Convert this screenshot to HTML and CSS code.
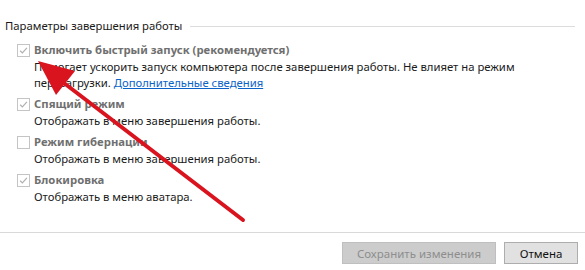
FILE: index.html
```html
<!DOCTYPE html>
<html lang="ru">
<head>
<meta charset="utf-8">
<link rel="stylesheet" href="styles.css">
</head>
<body>
<div class="page">
  <div class="group-title">
    <span class="group-text">Параметры завершения работы</span>
    <span class="rule"></span>
  </div>
  <ul class="options">
    <li class="option">
      <span class="cb checked"><svg viewBox="0 0 13 13"><path d="M2.5 6.8 L5.2 9.4 L10.5 3.4" /></svg></span>
      <div class="option-body">
        <div class="label">Включить быстрый запуск (рекомендуется)</div>
        <div class="desc">Помогает ускорить запуск компьютера после завершения работы. Не влияет на режим перезагрузки. <a class="link" href="#">Дополнительные сведения</a></div>
      </div>
    </li>
    <li class="option">
      <span class="cb checked"><svg viewBox="0 0 13 13"><path d="M2.5 6.8 L5.2 9.4 L10.5 3.4" /></svg></span>
      <div class="option-body">
        <div class="label">Спящий режим</div>
        <div class="desc">Отображать в меню завершения работы.</div>
      </div>
    </li>
    <li class="option">
      <span class="cb"></span>
      <div class="option-body">
        <div class="label">Режим гибернации</div>
        <div class="desc">Отображать в меню завершения работы.</div>
      </div>
    </li>
    <li class="option">
      <span class="cb checked"><svg viewBox="0 0 13 13"><path d="M2.5 6.8 L5.2 9.4 L10.5 3.4" /></svg></span>
      <div class="option-body">
        <div class="label">Блокировка</div>
        <div class="desc">Отображать в меню аватара.</div>
      </div>
    </li>
  </ul>
  <div class="footer">
    <button class="btn btn-disabled" disabled>Сохранить изменения</button>
    <button class="btn">Отмена</button>
  </div>
  <svg class="arrow" width="585" height="270" viewBox="0 0 585 270">
    <line x1="243" y1="220" x2="60" y2="80" stroke="#d9141f" stroke-width="4" stroke-linecap="round"/>
    <polygon points="38,61 75,71 56,95" fill="#d9141f"/>
  </svg>
</div>
</body>
</html>
```

FILE: styles.css
```css
* { box-sizing: border-box; }
html, body { margin: 0; padding: 0; background: #ffffff; }
body {
  font-family: "Noto Sans", "Open Sans", sans-serif;
  font-size: 11.3px;
  color: #1a1a1a;
}
.page {
  position: relative;
  width: 585px;
  height: 270px;
  overflow: hidden;
  padding-top: 18px;
}
.group-title {
  display: flex;
  align-items: center;
  gap: 8px;
  padding-left: 5px;
  padding-right: 10px;
  height: 16px;
  line-height: 16px;
}
.group-text { white-space: nowrap; }
.rule {
  flex: 1;
  height: 1px;
  background: #dcdcdc;
}
.options {
  list-style: none;
  margin: 0;
  padding: 0 0 0 17px;
  margin-top: 7px;
}
.option {
  display: flex;
  gap: 4px;
  margin-bottom: 4px;
}
.cb {
  flex: none;
  width: 13px;
  height: 13px;
  margin-top: 3px;
  border: 1px solid #c4c4c4;
  background: #fff;
  display: flex;
}
.cb svg { width: 11px; height: 11px; }
.cb path { fill: none; stroke: #b0b0b0; stroke-width: 1.4; }
.label {
  font-weight: 700;
  color: #6f6f6f;
  line-height: 18px;
}
.desc {
  line-height: 16px;
  max-width: 500px;
}
.link {
  color: #0a64c8;
  text-decoration: underline;
}
.footer {
  position: absolute;
  left: 0;
  right: 0;
  top: 232px;
  border-top: 1px solid #d9d9d9;
  display: flex;
  justify-content: flex-end;
  gap: 8px;
  padding: 9px 7px 0 0;
}
.btn {
  font-family: "Noto Sans", "Open Sans", sans-serif;
  font-size: 11.5px;
  height: 22px;
  padding: 0;
  border: 1px solid #adadad;
  background: #e1e1e1;
  color: #111;
}
.btn-disabled {
  width: 154px;
  background: #cccccc;
  border-color: #bfbfbf;
  color: #8e8e8e;
}
.btn:not(.btn-disabled) { width: 74px; }
.arrow {
  position: absolute;
  left: 0;
  top: 0;
  pointer-events: none;
}
```
